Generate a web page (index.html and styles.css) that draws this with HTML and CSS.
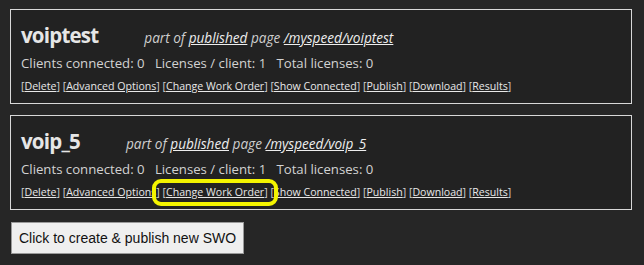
FILE: index.html
```html
<!DOCTYPE html>
<html>
<head>
<meta charset="utf-8">
<link rel="stylesheet" href="styles.css">
</head>
<body>
<div class="page">
  <div class="card">
    <div class="head">
      <span class="title">voiptest</span>
      <span class="sub">part of <a href="#">published</a> page <a href="#">/myspeed/voiptest</a></span>
    </div>
    <div class="stats">Clients connected: 0&nbsp;&nbsp; Licenses / client: 1&nbsp;&nbsp; Total licenses: 0</div>
    <div class="links">[<a href="#">Delete</a>] [<a href="#">Advanced Options</a>] [<a href="#">Change Work Order</a>] [<a href="#">Show Connected</a>] [<a href="#">Publish</a>] [<a href="#">Download</a>] [<a href="#">Results</a>]</div>
  </div>
  <div class="card">
    <div class="head">
      <span class="title">voip_5</span>
      <span class="sub">part of <a href="#">published</a> page <a href="#">/myspeed/voip_5</a></span>
    </div>
    <div class="stats">Clients connected: 0&nbsp;&nbsp; Licenses / client: 1&nbsp;&nbsp; Total licenses: 0</div>
    <div class="links">[<a href="#">Delete</a>] [<a href="#">Advanced Options</a>] <span class="hl">[<a href="#">Change Work Order</a>]</span> [<a href="#">Show Connected</a>] [<a href="#">Publish</a>] [<a href="#">Download</a>] [<a href="#">Results</a>]</div>
  </div>
  <button class="create">Click to create &amp; publish new SWO</button>
</div>
</body>
</html>
```
FILE: styles.css
```css
html, body {
  margin: 0;
  background: #262626;
}
.page {
  padding: 9px 12px 0 10px;
  font-family: "Open Sans", "Noto Sans", sans-serif;
  color: #d2d2d2;
}
.card {
  border: 1px solid #d8d8d8;
  background: #222222;
  padding: 15px 10px 9px 10px;
  margin-bottom: 11px;
}
.head {
  display: flex;
  align-items: baseline;
  gap: 46px;
  height: 22px;
  line-height: 20px;
}
.title {
  font-weight: bold;
  font-size: 20.5px;
  letter-spacing: -0.8px;
  color: #e6e6e6;
}
.sub {
  font-style: italic;
  font-size: 13.6px;
  color: #cfcfcf;
}
.sub a {
  color: #eeeeee;
}
.stats {
  font-size: 13.2px;
  line-height: 20px;
  margin-top: 6px;
  white-space: nowrap;
}
.links {
  font-size: 10.6px;
  line-height: 16px;
  margin-top: 5px;
  white-space: nowrap;
}
.links a {
  color: #e8e8e8;
}
.hl {
  position: relative;
}
.hl::after {
  content: "";
  position: absolute;
  left: -11px;
  right: -10px;
  top: -6px;
  bottom: -7px;
  border: 4px solid #f4f400;
  border-radius: 9px;
}
.create {
  display: block;
  margin: 12px 0 0 1px;
  font-family: "Liberation Sans", Arial, sans-serif;
  font-size: 14px;
  color: #111;
  background: #efefef;
  border: 1px solid #9a9a9a;
  padding: 0 7px;
  height: 32px;
}
```
